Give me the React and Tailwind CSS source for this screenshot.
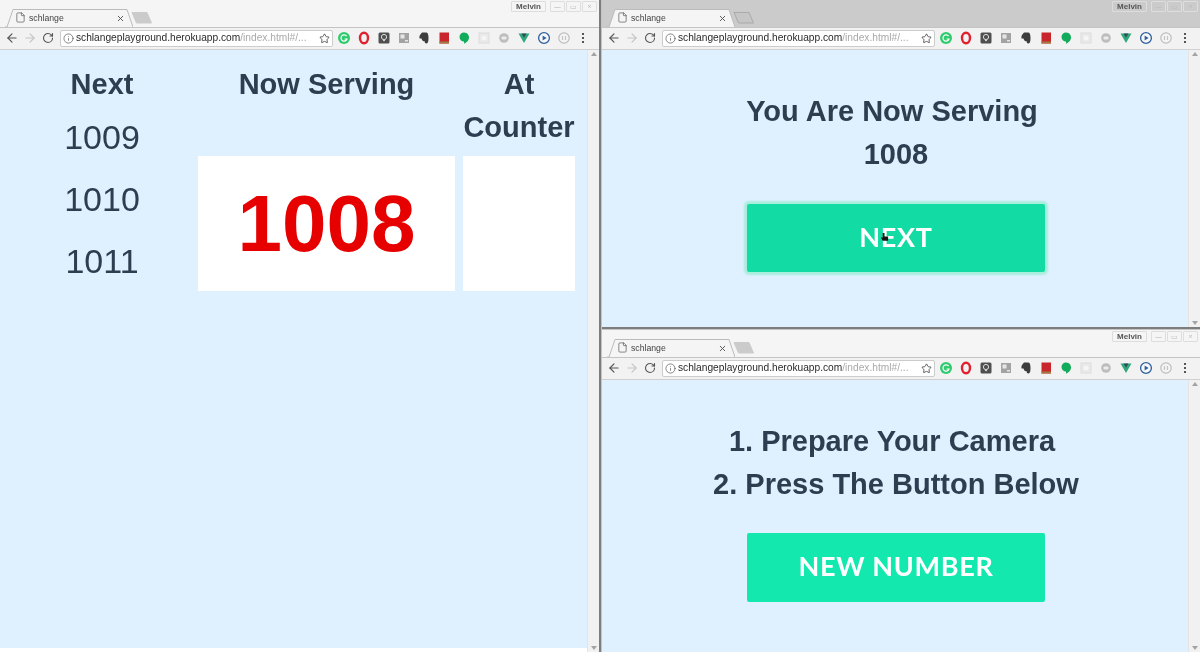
import React from 'react';
import { ArrowLeft, ArrowRight, RotateCw, Info, Star, File, X } from 'lucide-react';

const sans = "font-['Liberation_Sans',Arial,sans-serif]";

// icon ekstensi di toolbar, digambar manual
const extensions = [
  <svg key="g" viewBox="0 0 14 14" className="w-[14px] h-[14px]">
    <circle cx="7" cy="7" r="6" fill="#2fcb6f" />
    <path d="M9.6 5.2A3.1 3.1 0 1 0 10 8H7.6" fill="none" stroke="#fff" strokeWidth="1.2" />
  </svg>,
  <svg key="o" viewBox="0 0 14 14" className="w-[14px] h-[14px]">
    <ellipse cx="7" cy="7" rx="4" ry="5.2" fill="none" stroke="#e0212f" strokeWidth="2.4" />
  </svg>,
  <svg key="p" viewBox="0 0 14 14" className="w-[14px] h-[14px]">
    <rect x="1.5" y="1.5" width="11" height="11" rx="1.5" fill="#4f4f4f" />
    <circle cx="7" cy="6" r="2.6" fill="none" stroke="#ddd" strokeWidth="1" />
    <path d="M6 9.6h2" stroke="#ddd" strokeWidth="1" />
  </svg>,
  <svg key="i" viewBox="0 0 14 14" className="w-[14px] h-[14px]">
    <rect x="2" y="2" width="10" height="10" fill="#a3a3a3" />
    <path d="M3.5 3.5h4v4h-4z" fill="#e6e6e6" />
    <path d="M8 9h3v1.5H8z" fill="#e6e6e6" />
  </svg>,
  <svg key="e" viewBox="0 0 14 14" className="w-[14px] h-[14px]">
    <path d="M3 4l2-2.5h4.5C11 1.5 11.5 4 11.5 7c0 3-.5 5.5-2 5.5-1.5 0-2-1-1.5-2-2 0-3-1-3.5-3H2.500C2.300 6 2.500 5 3 4z" fill="#3c3c3c" />
  </svg>,
  <svg key="b" viewBox="0 0 14 14" className="w-[14px] h-[14px]">
    <rect x="2.500" y="1.500" width="9.500" height="11" fill="#c8262c" />
    <rect x="2.500" y="10.500" width="9.500" height="2" fill="#a57b45" />
  </svg>,
  <svg key="c" viewBox="0 0 14 14" className="w-[14px] h-[14px]">
    <path d="M7 1.500a5 5 0 0 1 4.500 7.200C10.800 10.300 8.800 12 7 12.800c.2-1 .1-1.800 0-2.300A4.500 4.500 0 0 1 7 1.500z" fill="#12ab5b" />
  </svg>,
  <svg key="d" viewBox="0 0 14 14" className="w-[14px] h-[14px]">
    <rect x="2" y="2" width="10" height="10" fill="#e9e9e9" stroke="#dcdcdc" />
    <circle cx="7" cy="7" r="2.500" fill="#f5f5f5" />
  </svg>,
  <svg key="f" viewBox="0 0 14 14" className="w-[14px] h-[14px]">
    <circle cx="7" cy="7" r="4.800" fill="#bdbdbd" />
    <rect x="4.500" y="5.500" width="5" height="3" rx="1" fill="#ececec" />
  </svg>,
  <svg key="v" viewBox="0 0 14 14" className="w-[14px] h-[14px]">
    <path d="M1.500 2.500h11L7 12z" fill="#2fa87a" />
    <path d="M4.600 2.500h4.800L7 6.700z" fill="#34495e" />
  </svg>,
  <svg key="r" viewBox="0 0 14 14" className="w-[14px] h-[14px]">
    <circle cx="7" cy="7" r="5.400" fill="#f8f8f8" stroke="#2f5f9e" strokeWidth="1.300" />
    <path d="M5.600 4.500L9.600 7l-4 2.500z" fill="#2f5f9e" />
  </svg>,
  <svg key="w" viewBox="0 0 14 14" className="w-[14px] h-[14px]">
    <circle cx="7" cy="7" r="5.200" fill="#f4f4f4" stroke="#bdbdbd" strokeWidth="1.200" />
    <path d="M5.500 5v4M8.500 5v4" stroke="#c4c4c4" strokeWidth="1.200" />
  </svg>,
];

const Tab = ({ dimmed }) => (
  <div className="flex items-end h-[27px] pl-[5px]">
    <div className="relative w-[128px] h-[18px] flex items-center pl-[24px] pr-[8px]">
      <svg className="absolute inset-0 w-[128px] h-[18px]" viewBox="0 0 128 18">
        <path d="M0 18h2L8 .5h114l6 17.500" fill="#f5f5f5" stroke="#bbbbbb" />
      </svg>
      <File size={11} strokeWidth={1.500} className="absolute left-[10px] top-[3px] text-[#555]" />
      <span className={`relative flex-1 text-[8.700px] leading-none text-[#444] ${sans}`}>schlange</span>
      <X size={9} strokeWidth={2.500} className="relative text-[#555]" />
    </div>
    <svg className="w-[22px] h-[12px] mb-[3px] -ml-[2px]" viewBox="0 0 22 12">
      {dimmed ? (
        <path d="M1 .5h15l4.500 10.500h-15z" fill="#c6c6c6" stroke="#a9a9a9" />
      ) : (
        <path d="M1 .5h15l4.500 10.500h-15z" fill="#cbcbcb" stroke="#cbcbcb" />
      )}
    </svg>
  </div>
);

const WindowControls = () => (
  <div className="flex items-start gap-[1px] pt-[1px] pr-[2px]">
    <div className={`w-[35px] h-[11px] mr-[3px] border border-[#dddddd] rounded-[1px] text-[8px] leading-[9px] font-bold text-center text-[#555] ${sans}`}>Melvin</div>
    {['—', '▭', '×'].map((c) => (
      <div key={c} className="w-[15px] h-[11px] border border-[#dedede] rounded-[1px] flex items-center justify-center text-[7px] leading-none text-[#bbb]">{c}</div>
    ))}
  </div>
);

const BrowserWindow = ({ dimmed, bottomStrip, className, children }) => (
  <div className={`flex flex-col overflow-hidden ${className}`}>
    <div className={`flex justify-between h-[27px] shrink-0 ${dimmed ? 'bg-[#cbcbcb]' : 'bg-[#f5f5f5]'}`}>
      <Tab dimmed={dimmed} />
      <WindowControls />
    </div>
    {/* Toolbar */}
    <div className="flex items-center h-[23px] shrink-0 pb-[1px] bg-[#f2f2f2] border-t border-[#c4c4c4] border-b border-b-[#d0d0d0]">
      <div className="flex items-center w-[60px] pl-[5px] gap-[4px] shrink-0">
        <ArrowLeft size={14} strokeWidth={2} className="text-[#555]" />
        <ArrowRight size={14} strokeWidth={2} className="text-[#c4c4c4]" />
        <RotateCw size={12} strokeWidth={2.200} className="text-[#555] ml-[1px]" />
      </div>
      <div className="flex items-center w-[273px] h-[17px] shrink-0 bg-white border border-[#cccccc] rounded-[2px] pl-[1px]">
        <Info size={11} strokeWidth={1.500} className="shrink-0 ml-[1px] text-[#555]" />
        <span className={`ml-[2px] text-[10.200px] leading-none whitespace-nowrap text-[#2a2a2a] ${sans}`}>
          schlangeplayground.herokuapp.com<span className="text-[#aaaaaa]">/index.html#/...</span>
        </span>
        <Star size={11} strokeWidth={1.800} className="shrink-0 ml-auto mr-[2px] text-[#444]" />
      </div>
      <div className="flex items-center pl-[4px] gap-[6px]">
        {extensions}
        <div className="flex flex-col gap-[2px] ml-[5px]">
          <span className="w-[2px] h-[2px] bg-[#555]" />
          <span className="w-[2px] h-[2px] bg-[#555]" />
          <span className="w-[2px] h-[2px] bg-[#555]" />
        </div>
      </div>
    </div>
    <div className="flex flex-1 min-h-0">
      <div className="flex flex-col flex-1 min-w-0">
        <div className="flex-1 min-h-0 bg-[#dff0ff] text-[#2c3e50]">{children}</div>
        {bottomStrip && <div className="h-[4px] bg-white" />}
      </div>
      {/* Scrollbar */}
      <div className="w-[12px] shrink-0 flex flex-col items-center justify-between bg-[#f1f1f1] border-l border-[#e4e4e4] py-[2px] text-[#999]">
        <span className="w-0 h-0 border-x-[3px] border-x-transparent border-b-[4px] border-b-[#a3a3a3]" />
        <span className="w-0 h-0 border-x-[3px] border-x-transparent border-t-[4px] border-t-[#a3a3a3]" />
      </div>
    </div>
  </div>
);

const Display = () => (
  <div className={`flex pt-[13px] ${sans}`}>
    <div className="w-[198px] shrink-0 text-center pl-[6px]">
      <h2 className="text-[29px] leading-[43px] font-bold">Next</h2>
      {[1009, 1010, 1011].map((n) => (
        <div key={n} className="text-[34px] leading-[62.500px] -mt-[0.300px]">{n}</div>
      ))}
    </div>
    <div className="w-[257px] shrink-0 mr-[8px] text-center">
      <h2 className="h-[86px] mb-[7px] text-[29px] leading-[43px] font-bold">Now Serving</h2>
      <div className="h-[135px] bg-white flex items-center justify-center text-[80px] font-bold leading-none text-[#e60000]">1008</div>
    </div>
    <div className="w-[112px] shrink-0 text-center">
      <h2 className="h-[86px] mb-[7px] text-[29px] leading-[43px] font-bold">At<br />Counter</h2>
      <div className="h-[135px] bg-white" />
    </div>
  </div>
);

const Panel = ({ lines, label, className, buttonClass, children }) => (
  <div className={`flex flex-col items-center pl-[2px] ${sans} ${className}`}>
    <h1 className="text-[29px] leading-[43px] font-bold text-center">
      <div className="mr-[8px]">{lines[0]}</div>
      <div>{lines[1]}</div>
    </h1>
    <button className={`relative w-[298px] rounded-[2px] pb-[2px] text-white text-[27px] font-bold tracking-[0.7px] font-['Lato',sans-serif] ${buttonClass}`}>
      {label}
      {children}
    </button>
  </div>
);

export default function App() {
  return (
    <div className="flex w-[1200px] h-[652px] overflow-hidden bg-[#f0f0f0] blur-[0.35px]">
      <BrowserWindow bottomStrip className="w-[599px] shrink-0">
        <Display />
      </BrowserWindow>
      <div className="w-[3px] shrink-0 bg-[#7d7d7d] border-r border-[#c4c4c4]" />
      <div className="flex flex-col flex-1 min-w-0">
        <BrowserWindow dimmed className="h-[327px] shrink-0">
          <Panel
            className="pt-[40px]"
            lines={['You Are Now Serving', '1008']}
            label="NEXT"
            buttonClass="h-[68px] mt-[28px] bg-[#12dba3] shadow-[0_0_2px_3px_#a9eedd]"
          >
            {/* Kursor tangan */}
            <svg viewBox="0 0 10 10" className="absolute left-[133px] top-[29px] w-[9px] h-[9px]">
              <path d="M3 0h2v4h4v4.500H3L1 5h2z" fill="#141414" />
            </svg>
          </Panel>
        </BrowserWindow>
        <div className="h-[3px] shrink-0 bg-[#7d7d7d] border-b border-[#c4c4c4]" />
        <BrowserWindow className="flex-1 min-h-0">
          <Panel
            className="pt-[40px]"
            lines={['1. Prepare Your Camera', '2. Press The Button Below']}
            label="NEW NUMBER"
            buttonClass="h-[69px] mt-[27px] bg-[#13e8ae]"
          />
        </BrowserWindow>
      </div>
    </div>
  );
}
